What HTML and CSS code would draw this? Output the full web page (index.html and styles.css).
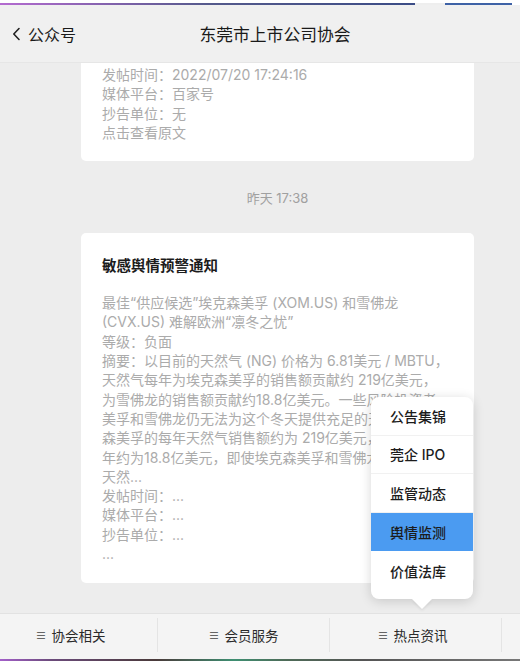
FILE: index.html
```html
<!DOCTYPE html>
<html lang="zh-CN">
<head>
<meta charset="utf-8">
<link rel="stylesheet" href="styles.css">
</head>
<body>
<div class="app">
  <div class="stripe top"><span class="seg a"></span><span class="gap"></span><span class="seg b"></span></div>
  <header class="header">
    <div class="back"><svg class="chev" width="9" height="14" viewBox="0 0 9 14"><path d="M7 1.5 L1.8 7 L7 12.5" fill="none" stroke="#222" stroke-width="1.6" stroke-linecap="round" stroke-linejoin="round"/></svg><span>公众号</span></div>
    <div class="title">东莞市上市公司协会</div>
  </header>
  <main class="content">
    <div class="card first">
      <p class="line">发帖时间：2022/07/20 17:24:16</p>
      <p class="line">媒体平台：百家号</p>
      <p class="line">抄告单位：无</p>
      <p class="line">点击查看原文</p>
    </div>
    <div class="time">昨天 17:38</div>
    <div class="card second">
      <h2 class="ctitle">敏感舆情预警通知</h2>
      <div class="body">
        <p class="line">最佳“供应候选”埃克森美孚 (XOM.US) 和雪佛龙</p>
        <p class="line">(CVX.US) 难解欧洲“凛冬之忧”</p>
        <p class="line">等级：负面</p>
        <p class="line">摘要：以目前的天然气 (NG) 价格为 6.81美元 / MBTU，</p>
        <p class="line">天然气每年为埃克森美孚的销售额贡献约 219亿美元，</p>
        <p class="line">为雪佛龙的销售额贡献约18.8亿美元。一些风险投资者</p>
        <p class="line">美孚和雪佛龙仍无法为这个冬天提供充足的天然气，埃克</p>
        <p class="line">森美孚的每年天然气销售额约为 219亿美元，雪佛龙每</p>
        <p class="line">年约为18.8亿美元，即使埃克森美孚和雪佛龙增加</p>
        <p class="line">天然...</p>
        <p class="line">发帖时间：...</p>
        <p class="line">媒体平台：...</p>
        <p class="line">抄告单位：...</p>
        <p class="line">...</p>
      </div>
    </div>
  </main>
  <nav class="tabbar">
    <div class="tab t1"><span class="ham">≡</span>协会相关</div>
    <div class="tab t2"><span class="ham">≡</span>会员服务</div>
    <div class="tab t3"><span class="ham">≡</span>热点资讯</div>
  </nav>
  <div class="stripe bottom"></div>
  <div class="popup">
    <div class="item">公告集锦</div>
    <div class="item">莞企 IPO</div>
    <div class="item">监管动态</div>
    <div class="item active">舆情监测</div>
    <div class="item">价值法库</div>
    <span class="arrow"></span>
  </div>
</div>
</body>
</html>
```

FILE: styles.css
```css
* { box-sizing: border-box; margin: 0; padding: 0; }
html, body { background: #fff; }
body {
  width: 530px;
  height: 663px;
  overflow: hidden;
  font-family: "Inter", "Noto Sans CJK SC", sans-serif;
}
.app {
  position: relative;
  width: 520px;
  height: 661px;
  display: flex;
  flex-direction: column;
  padding-top: 3px;
}
.stripe.top {
  height: 2px;
  display: flex;
}
.stripe.top .seg.a { width: 415px; background: linear-gradient(90deg, #b46bd0, #555a8c 50%, #3b4c86); }
.stripe.top .gap { width: 30px; background: #eee; }
.stripe.top .seg.b { width: 67px; background: #3e62a6; }
.header {
  height: 58px;
  background: #f0f0f0;
  border-bottom: 1px solid #e6e6e6;
  display: flex;
  align-items: center;
  position: relative;
  flex-shrink: 0;
}
.back {
  display: flex;
  align-items: center;
  gap: 7px;
  padding-left: 12px;
  font-size: 16px;
  color: #1a1a1a;
}
.title {
  position: absolute;
  left: 0; right: 0;
  text-align: center;
  padding-left: 30px;
  font-size: 16.8px;
  color: #1a1a1a;
  pointer-events: none;
}
.content {
  flex: 1;
  background: #ededed;
  overflow: hidden;
  display: flex;
  flex-direction: column;
  align-items: flex-start;
  padding-left: 81px;
}
.card {
  width: 393px;
  background: #fff;
  border-radius: 5px;
  padding-left: 21px;
  overflow: hidden;
  flex-shrink: 0;
}
.card.first {
  border-radius: 0 0 5px 5px;
  padding-top: 2px;
  padding-bottom: 19px;
}
.line {
  font-size: 14px;
  line-height: 19.3px;
  color: #ababab;
  white-space: nowrap;
}
.time {
  width: 393px;
  margin-top: 27px;
  height: 20px;
  line-height: 20px;
  font-size: 13px;
  color: #a0a0a0;
  text-align: center;
}
.card.second {
  margin-top: 25px;
  padding-top: 23px;
  padding-bottom: 20px;
}
.ctitle {
  font-size: 14.5px;
  line-height: 20px;
  font-weight: 700;
  color: #1c1c1c;
  margin-bottom: 17px;
}
.tabbar {
  height: 46px;
  background: #f4f4f4;
  border-top: 1px solid #e2e2e2;
  display: flex;
  align-items: center;
  padding-bottom: 3px;
  flex-shrink: 0;
}
.tab {
  height: 34px;
  display: flex;
  align-items: center;
  justify-content: center;
  gap: 5px;
  font-size: 13.5px;
  color: #2a2a2a;
  border-right: 1px solid #e4e4e4;
}
.ham { font-size: 11px; color: #444; }
.tab.t1 { width: 158px; padding-right: 16px; }
.tab.t2 { width: 172px; }
.tab.t3 { width: 172px; padding-right: 6px; }
.stripe.bottom {
  height: 2px;
  flex-shrink: 0;
  background: linear-gradient(90deg, #a35fc9 0, #6b4b7a 10%, #4a3a3a 30%, #3f8f72 45%, #4e6b58 55%, #555 70%, #777 100%);
}
.popup {
  position: absolute;
  left: 371px;
  top: 397px;
  width: 102px;
  background: #fff;
  border-radius: 8px;
  padding-bottom: 9px;
  box-shadow: 0 2px 12px rgba(0,0,0,0.16);
}
.item {
  height: 38.6px;
  display: flex;
  align-items: center;
  padding-left: 19px;
  font-size: 14px;
  font-weight: 500;
  color: #1c1c1c;
  border-bottom: 1px solid #f1f1f1;
}
.item:first-child { border-radius: 8px 8px 0 0; }
.item.active { background: #4b9bf1; border-bottom-color: #4b9bf1; }
.item:last-of-type { border-bottom: none; }
.arrow {
  position: absolute;
  left: 41px;
  bottom: -10px;
  width: 0; height: 0;
  border-left: 10px solid transparent;
  border-right: 10px solid transparent;
  border-top: 10px solid #fff;
  filter: drop-shadow(0 2px 1px rgba(0,0,0,0.06));
}
```
